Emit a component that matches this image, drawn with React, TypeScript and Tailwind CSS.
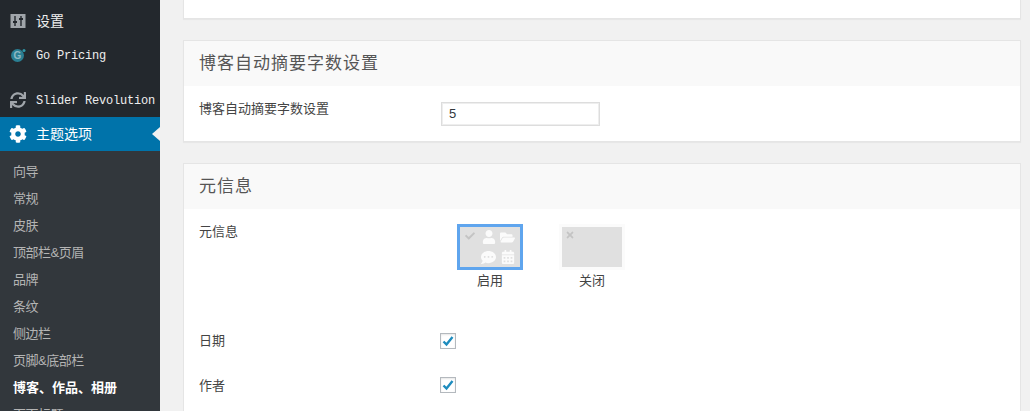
import React from "react";
import { FaCog, FaSync, FaCheck, FaUser, FaFolderOpen, FaCommentDots, FaCalendarAlt, FaTimes } from "react-icons/fa";

const cjk = "font-['Liberation_Sans','Noto_Sans_CJK_SC',sans-serif]";
const subs = ["向导", "常规", "皮肤", "顶部栏&页眉", "品牌", "条纹", "侧边栏", "页脚&底部栏", "博客、作品、相册", "页面标题"];

function SettingsIcon() {
  return (
    <svg width="16" height="16" viewBox="0 0 16 16" className="shrink-0">
      <rect x="0.5" y="1" width="15" height="14" fill="#a0a5aa" />
      <path d="M5 3v10M11 3v10" stroke="#23282d" strokeWidth="1.4" />
      <path d="M3 9h4M9 6h4" stroke="#23282d" strokeWidth="2" />
    </svg>
  );
}

function GoIcon() {
  return (
    <svg width="16" height="16" viewBox="0 0 16 16" className="shrink-0">
      <circle cx="7.5" cy="8.5" r="6.5" fill="#2a7f93" />
      <circle cx="14" cy="3.5" r="1.5" fill="#2f97a8" />
      <text x="7.5" y="12" textAnchor="middle" fontSize="10" fontWeight="700" fill="#8fb9c4" fontFamily="Liberation Sans">G</text>
    </svg>
  );
}

function TopItem({ icon, label, mono }: { icon: React.ReactNode; label: string; mono?: boolean }) {
  return (
    <div className="flex h-[34px] shrink-0 items-center">
      <div className="flex w-[36px] shrink-0 justify-center">{icon}</div>
      {mono ? (
        <span className="whitespace-nowrap pt-[2px] font-['Liberation_Mono',monospace] text-[12px] tracking-[-0.2px] text-[#eeeeee]">{label}</span>
      ) : (
        <span className={`${cjk} text-[14px] text-[#eeeeee]`}>{label}</span>
      )}
    </div>
  );
}

function Sidebar() {
  return (
    <aside className="flex h-[411px] w-[160px] shrink-0 flex-col overflow-hidden bg-[#23282d] pt-[4px]">
      <TopItem icon={<SettingsIcon />} label="设置" />
      <TopItem icon={<GoIcon />} label="Go Pricing" mono />
      <div className="mt-[11px] shrink-0">
        <TopItem icon={<FaSync size={16} color="#a0a5aa" />} label="Slider Revolution" mono />
      </div>
      <div className="relative flex h-[34px] shrink-0 items-center bg-[#0073aa]">
        <div className="flex w-[36px] shrink-0 justify-center">
          <FaCog size={18} color="#ffffff" />
        </div>
        <span className={`${cjk} text-[14px] text-white`}>主题选项</span>
        <div className="absolute right-0 top-[10px] h-0 w-0 border-y-[7px] border-r-[8px] border-y-transparent border-r-[#f1f1f1]" />
      </div>
      <div className="shrink-0 bg-[#32373c] pb-[20px] pt-[7px]">
        {subs.map((s, i) => (
          <div
            key={s}
            className={`flex h-[27px] items-center whitespace-nowrap pl-[13px] ${cjk} text-[13px] ${i === 8 ? "font-bold text-white" : "tracking-[-0.5px] text-[#b4b4b4]"}`}
          >
            {s}
          </div>
        ))}
      </div>
    </aside>
  );
}

function CardHeader({ title }: { title: string }) {
  return (
    <div className={`flex h-[45px] items-center bg-[#f9f9f9] pl-[15px] ${cjk} text-[17px] tracking-[1px] text-[#555555]`}>{title}</div>
  );
}

function Check() {
  return (
    <div className="flex h-[16px] w-[16px] items-center justify-center border border-[#b4b9be] bg-white shadow-[inset_0_1px_2px_rgba(0,0,0,0.1)]">
      <svg width="12" height="12" viewBox="0 0 12 12">
        <path d="M1.5 6.5L4.5 9.5L10.5 2" fill="none" stroke="#1e8cbe" strokeWidth="2.4" />
      </svg>
    </div>
  );
}

function CheckRow({ label, className }: { label: string; className: string }) {
  return (
    <div className={`flex items-center ${className}`}>
      <div className={`w-[256px] pl-[15px] ${cjk} text-[13px] text-[#444444]`}>{label}</div>
      <Check />
    </div>
  );
}

export default function App() {
  return (
    <div className="flex h-[411px] w-[1030px] overflow-hidden bg-[#f1f1f1]">
      <Sidebar />
      <main className="h-[411px] flex-1 overflow-hidden pl-[23px] pr-[9px]">
        <div className="h-[19px] border-x border-b border-[#e5e5e5] bg-white shadow-[0_1px_1px_rgba(0,0,0,0.04)]" />

        <section className="mt-[21px] h-[102px] border border-[#e5e5e5] bg-white shadow-[0_1px_1px_rgba(0,0,0,0.04)]">
          <CardHeader title="博客自动摘要字数设置" />
          <div className="flex items-start pt-[16px]">
            <div className={`w-[257px] pl-[15px] ${cjk} text-[13px] leading-[14px] text-[#444444]`}>博客自动摘要字数设置</div>
            <div className="flex h-[24px] w-[159px] items-center border border-[#dddddd] bg-white pl-[7px] font-['Liberation_Sans',sans-serif] text-[13px] text-[#32373c] shadow-[inset_0_0_0_1px_#eeeeee]">
              5
            </div>
          </div>
        </section>

        <section className="mt-[21px] border border-[#e5e5e5] bg-white">
          <CardHeader title="元信息" />
          <div className="flex items-start pt-[15px]">
            <div className={`w-[273px] pl-[15px] pt-[1px] ${cjk} text-[13px] leading-[14px] text-[#444444]`}>元信息</div>
            <div className="flex gap-[36px]">
              <div className="flex w-[66px] flex-col items-center">
                <div className="grid h-[46px] w-[66px] grid-cols-3 grid-rows-2 items-center justify-items-center border-[3px] border-[#5fa5ee] bg-[#e0e0e0] pr-[3px]">
                  <FaCheck size={10} color="#c4c4c4" className="-mt-[2px]" />
                  <FaUser size={14} color="#fbfbfb" />
                  <FaFolderOpen size={15} color="#fbfbfb" />
                  <span />
                  <FaCommentDots size={15} color="#fbfbfb" />
                  <FaCalendarAlt size={14} color="#fbfbfb" />
                </div>
                <div className={`mt-[3px] ${cjk} text-[13px] leading-[16px] text-[#444444]`}>启用</div>
              </div>
              <div className="flex w-[66px] flex-col items-center">
                <div className="flex h-[46px] w-[66px] items-start border-[3px] border-[#fbfbfb] bg-[#e0e0e0] pl-[3px] pt-[3px]">
                  <FaTimes size={10} color="#c4c4c4" />
                </div>
                <div className={`mt-[3px] ${cjk} text-[13px] leading-[16px] text-[#444444]`}>关闭</div>
              </div>
            </div>
          </div>
          <CheckRow label="日期" className="mt-[42px]" />
          <CheckRow label="作者" className="mt-[25px]" />
          <div className="h-[40px]" />
        </section>
      </main>
    </div>
  );
}
